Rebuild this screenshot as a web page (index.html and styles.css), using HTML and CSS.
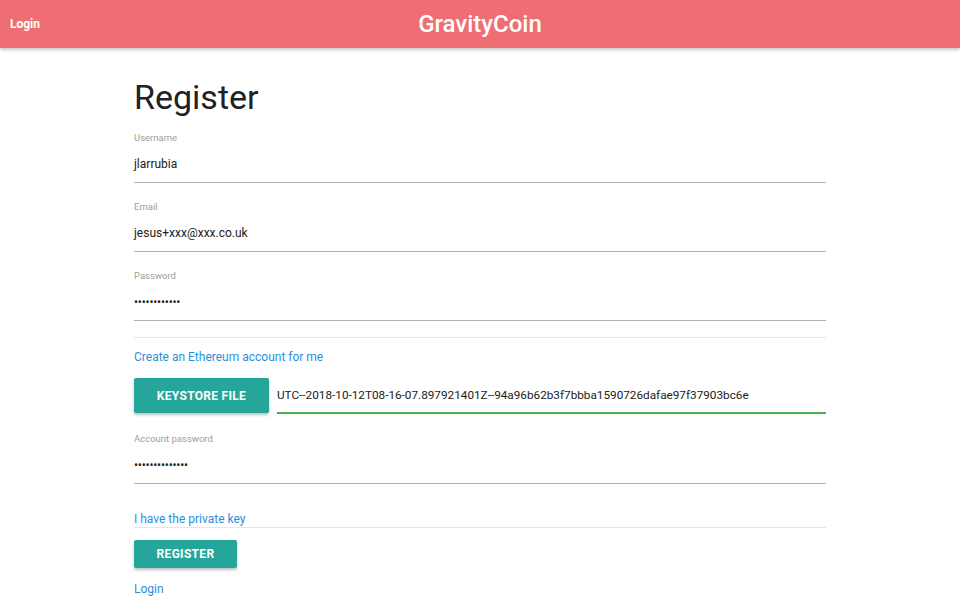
FILE: index.html
```html
<!DOCTYPE html>
<html>
<head>
<meta charset="utf-8">
<title>GravityCoin</title>
<link rel="stylesheet" href="styles.css">
</head>
<body>
<header class="topbar">
  <a class="topbar-login">Login</a>
  <div class="topbar-title">GravityCoin</div>
  <div></div>
</header>
<main class="page">
  <h1 class="title">Register</h1>
  <form class="form">
    <div class="field">
      <label class="field-label">Username</label>
      <div class="field-value">jlarrubia</div>
    </div>
    <div class="field field-next">
      <label class="field-label">Email</label>
      <div class="field-value">jesus+xxx@xxx.co.uk</div>
    </div>
    <div class="field field-next">
      <label class="field-label">Password</label>
      <div class="field-value dots">••••••••••••</div>
    </div>
    <div class="divider"></div>
    <a class="link link-create">Create an Ethereum account for me</a>
    <div class="keystore-row">
      <button type="button" class="btn btn-keystore">Keystore file</button>
      <div class="file-input">UTC--2018-10-12T08-16-07.897921401Z--94a96b62b3f7bbba1590726dafae97f37903bc6e</div>
    </div>
    <div class="field field-account">
      <label class="field-label">Account password</label>
      <div class="field-value dots">••••••••••••••</div>
    </div>
    <div class="private-row"><a class="link">I have the private key</a></div>
    <button type="button" class="btn btn-register">Register</button>
    <a class="link link-login">Login</a>
  </form>
</main>
</body>
</html>
```
FILE: styles.css
```css
* { box-sizing: border-box; }
html, body { margin: 0; padding: 0; }
body {
  font-family: Roboto, "Noto Sans", "Liberation Sans", sans-serif;
  background: #ffffff;
  color: #212121;
  width: 960px;
  height: 615px;
  overflow: hidden;
}
.topbar {
  height: 48px;
  background: #ef6e73;
  display: grid;
  grid-template-columns: 1fr auto 1fr;
  align-items: center;
  padding: 0 10px;
  box-shadow: 0 2px 3px rgba(0, 0, 0, 0.22);
  position: relative;
  z-index: 1;
}
.topbar-login {
  color: #ffffff;
  font-size: 12px;
  font-weight: 700;
  justify-self: start;
}
.topbar-title {
  color: #ffffff;
  font-size: 24px;
  font-weight: 500;
}
.page {
  width: 692px;
  margin: 0 auto;
  padding-top: 29px;
}
.title {
  margin: 0;
  font-size: 34px;
  font-weight: 400;
  line-height: 40px;
  color: #212121;
}
.form {
  display: flex;
  flex-direction: column;
  align-items: stretch;
  margin-top: 15px;
}
.field {
  display: flex;
  flex-direction: column;
  border-bottom: 1px solid #b0b0b0;
  padding-bottom: 8px;
}
.field-next { margin-top: 18px; }
.field-account { margin-top: 19px; }
.field-label {
  font-size: 9.5px;
  line-height: 12px;
  color: #9e9e9e;
}
.field-value {
  margin-top: 10px;
  font-size: 12px;
  line-height: 20px;
  color: #212121;
}
.dots {
  font-size: 12px;
  letter-spacing: -0.2px;
  color: #222;
}
.divider {
  margin-top: 16px;
  height: 1px;
  background: #e6e6e6;
}
.link {
  color: #2a8fdc;
  font-size: 12px;
  line-height: 16px;
  text-decoration: none;
}
.link-create { margin-top: 11px; align-self: flex-start; }
.keystore-row {
  display: flex;
  align-items: flex-start;
  gap: 8px;
  margin-top: 13px;
}
.btn {
  border: none;
  border-radius: 2px;
  background: #26a69a;
  color: #ffffff;
  font-family: Roboto, "Noto Sans", "Liberation Sans", sans-serif;
  font-size: 12px;
  font-weight: 700;
  letter-spacing: 0.3px;
  text-transform: uppercase;
  box-shadow: 0 2px 3px rgba(0, 0, 0, 0.25);
  padding: 0;
}
.btn-keystore {
  width: 135px;
  height: 35px;
  flex: none;
}
.file-input {
  flex: 1;
  height: 36px;
  line-height: 34px;
  font-size: 11.75px;
  color: #212121;
  border-bottom: 2px solid #4caf50;
  white-space: nowrap;
  overflow: hidden;
}
.private-row {
  margin-top: 27px;
  border-bottom: 1px solid #e6e6e6;
  display: flex;
}
.btn-register {
  margin-top: 12px;
  width: 103px;
  height: 28px;
  align-self: flex-start;
}
.link-login {
  margin-top: 13px;
  align-self: flex-start;
}
```
